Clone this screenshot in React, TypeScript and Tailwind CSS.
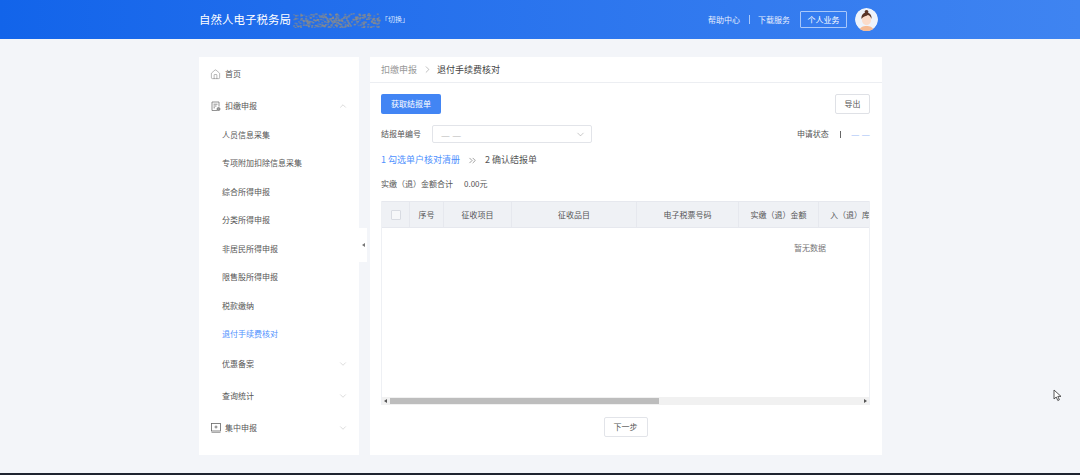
import { ChevronDown, ChevronUp, ChevronRight, ChevronsRight, House } from "lucide-react";

const subItems = ["人员信息采集", "专项附加扣除信息采集", "综合所得申报", "分类所得申报", "非居民所得申报", "限售股所得申报", "税款缴纳"];

const columns = [
  { title: "序号", width: "w-[34px]" },
  { title: "征收项目", width: "w-[68px]" },
  { title: "征收品目", width: "w-[125px]" },
  { title: "电子税票号码", width: "w-[102px]" },
  { title: "实缴（退）金额", width: "w-[80px]" },
];

// the blurred-out taxpayer name in the header
const rand = (n: number) => {
  const v = Math.sin(n * 12.9898) * 43758.5453;
  return v - Math.floor(v);
};
const noise = Array.from({ length: 300 }, (_, i) => ({
  x: rand(i + 1) * 86,
  y: 1 + rand(i + 500) * 14,
  o: 0.35 + rand(i + 900) * 0.5,
}));

function Avatar() {
  return (
    <svg width="23" height="23" viewBox="0 0 23 23" className="rounded-full">
      <circle cx="11.5" cy="11.5" r="11.5" fill="#eef3fb" />
      <path d="M4 23c1-4 4-5 7.500-5s6.500 1 7.500 5z" fill="#f6bb94" />
      <ellipse cx="11.500" cy="11.500" rx="4.600" ry="5.800" fill="#fbdcca" />
      <path d="M6.500 11c-.5-4 2-6.500 5-6.500s5.500 2.500 5 6.500c-.8-2.500-2-3.500-3.500-4-1.500 1-4.500 1-6.500 4z" fill="#5a3527" />
      <circle cx="11.500" cy="3.800" r="1.900" fill="#5a3527" />
    </svg>
  );
}

function ReportIcon() {
  return (
    <svg width="10" height="11" viewBox="0 0 10 11" fill="none" stroke="#777" strokeWidth="0.8">
      <path d="M6.500 9.500H1V1h7v4.500" />
      <path d="M2.500 3.200h4M2.500 5h3M2.500 6.800h1.500" />
      <circle cx="7.500" cy="8" r="1.500" fill="#999" />
    </svg>
  );
}

function GroupIcon() {
  return (
    <svg width="10" height="10" viewBox="0 0 10 10" fill="none" stroke="#666" strokeWidth="0.8">
      <rect x="0.500" y="0.500" width="9" height="7.500" />
      <path d="M0.500 9.500h9" stroke="#aaa" strokeWidth="1" />
      <path d="M5 2.500v3M3.500 4h3" />
    </svg>
  );
}

function MenuRow({ label, icon, open, className }: { label: string; icon?: React.ReactNode; open?: boolean; className: string }) {
  const Arrow = open ? ChevronUp : ChevronDown;
  return (
    <div className={`flex items-center pr-[11px] text-[8px] text-[#555] ${icon ? "pl-[12px]" : "pl-[23px]"} ${className}`}>
      {icon && <span className="mr-[4px] flex w-[10px] justify-center">{icon}</span>}
      <span className="grow">{label}</span>
      <Arrow size={10} strokeWidth={1} className="text-[#aaa]" />
    </div>
  );
}

function Sidebar() {
  return (
    <aside className="relative h-[398px] w-[160px] bg-white pt-[1px]">
      <div className="flex h-[32px] items-center gap-[4px] pl-[11px] text-[8px] text-[#555]">
        <House size={11} strokeWidth={1} className="text-[#666]" />
        <span>首页</span>
      </div>
      <MenuRow label="扣缴申报" icon={<ReportIcon />} open className="h-[32px]" />
      <div className="-mt-[1.500px] mb-[-1px]">
        {subItems.map((item) => (
          <div key={item} className="flex h-[28.500px] items-center pl-[23px] text-[8px] text-[#555]">
            {item}
          </div>
        ))}
        <div className="flex h-[28.500px] items-center pl-[23px] text-[8px] text-[#4d90fe]">退付手续费核对</div>
      </div>
      <MenuRow label="优惠备案" className="h-[32px]" />
      <MenuRow label="查询统计" className="h-[32px]" />
      <MenuRow label="集中申报" icon={<GroupIcon />} className="h-[32px]" />
      <div className="absolute left-[160px] top-[171px] flex h-[34px] w-[8px] items-center justify-center bg-white">
        <span className="h-0 w-0 border-y-[2.500px] border-r-[3px] border-y-transparent border-r-[#777]" />
      </div>
    </aside>
  );
}

function DataTable() {
  return (
    <div className="mt-[11px] h-[204px] overflow-hidden border-x border-[#eef0f4]">
      <div className="flex h-[27px] border-y border-[#e6e8ee] bg-[#eff1f5] text-[8px] text-[#555]">
        <div className="flex w-[28px] shrink-0 items-center justify-center border-r border-[#e6e8ee]">
          <span className="h-[10px] w-[10px] rounded-[1px] border border-[#d8dbe2] bg-[#f6f7f9]" />
        </div>
        {columns.map((col) => (
          <div key={col.title} className={`flex shrink-0 items-center justify-center border-r border-[#e6e8ee] ${col.width}`}>
            {col.title}
          </div>
        ))}
        <div className="flex grow items-center overflow-hidden whitespace-nowrap pl-[11px]">入（退）库</div>
      </div>
      <div className="flex h-[169px] justify-center pl-[369px] pt-[14px] text-[8px] text-[#777]">暂无数据</div>
      <div className="flex h-[8px] items-center bg-[#f1f1f1] px-[2px]">
        <span className="h-0 w-0 border-y-[2px] border-r-[3px] border-y-transparent border-r-[#555]" />
        <div className="ml-[3px] h-[6px] w-[269px] bg-[#bdbdbd]" />
        <span className="ml-auto h-0 w-0 border-y-[2px] border-l-[3px] border-y-transparent border-l-[#555]" />
      </div>
    </div>
  );
}

function Main() {
  return (
    <main className="h-[398px] w-[512px] bg-white">
      <div className="flex h-[26px] items-center border-b border-[#eceef2] pl-[11px] text-[9px]">
        <span className="text-[#999]">扣缴申报</span>
        <ChevronRight size={11} strokeWidth={1} className="ml-[5px] mr-[4px] text-[#777]" />
        <span className="text-[#444]">退付手续费核对</span>
      </div>
      <div className="px-[11px] pr-[12px] pt-[11px]">
        <div className="flex justify-between">
          <button className="h-[20px] w-[60px] rounded-[2px] bg-[#4285f4] text-[8px] text-white">获取结报单</button>
          <button className="h-[20px] w-[35px] rounded-[2px] border border-[#dfe1e6] text-[8px] text-[#555]">导出</button>
        </div>
        <div className="mt-[11px] flex h-[18px] items-center text-[8px] text-[#555]">
          <span className="w-[51px]">结报单编号</span>
          <div className="flex h-[18px] w-[160px] items-center justify-between rounded-[2px] border border-[#e2e4e9] pl-[8px] pr-[5px] text-[10px] text-[#ccc]">
            <span>— —</span>
            <ChevronDown size={11} strokeWidth={1} className="text-[#888]" />
          </div>
          <span className="ml-auto">申请状态</span>
          <span className="ml-[10px] h-[7px] w-px translate-x-[1px] bg-[#666]" />
          <span className="ml-[11px] text-[9.500px] text-[#a9c6f7]">— —</span>
        </div>
        <div className="mt-[9px] flex h-[16px] items-center text-[9px]">
          <span className="text-[#4d90fe]">1 勾选单户核对清册</span>
          <ChevronsRight size={11} strokeWidth={1.2} className="ml-[7px] mr-[7px] text-[#555]" />
          <span className="text-[#555]">2 确认结报单</span>
        </div>
        <div className="mt-[9px] flex h-[13px] items-center text-[8px] text-[#555]">
          <span>实缴（退）金额合计</span>
          <span className="ml-[11px]">0.00元</span>
        </div>
        <DataTable />
        <div className="mt-[12px] flex justify-center">
          <button className="h-[20px] w-[44px] rounded-[2px] border border-[#e2e4e9] text-[8px] text-[#555]">下一步</button>
        </div>
      </div>
    </main>
  );
}

export default function App() {
  return (
    <div className="flex h-[475px] w-[1080px] flex-col overflow-hidden bg-[#f3f5f9] font-['Noto_Sans_CJK_SC',sans-serif]">
      <header className="flex h-[39px] shrink-0 items-center bg-gradient-to-r from-[#1264ea] to-[#3f84f1] pl-[199px] pr-[202px] text-white">
        <span className="text-[11.400px] tracking-[0.100px]">自然人电子税务局</span>
        <svg width="88" height="16" viewBox="0 0 88 16" className="ml-[2px] blur-[0.5px]">
          {noise.map((d, i) => (
            <rect key={i} x={d.x} y={d.y} width="2" height="1.500" fill="#8d8c88" opacity={d.o} />
          ))}
        </svg>
        <span className="text-[7px] text-[#dce8ff]">「切换」</span>
        <span className="ml-auto translate-x-[1px] text-[8px] text-[#e6eefe]">帮助中心</span>
        <span className="mx-[9px] h-[9px] w-px translate-x-[1px] bg-[#a9c8fa]" />
        <span className="text-[8px] text-[#e6eefe]">下载服务</span>
        <span className="ml-[10px] flex h-[17px] w-[47px] items-center justify-center rounded-[1px] border border-[#a9c8fa] text-[8px]">个人业务</span>
        <span className="ml-[8px] flex">
          <Avatar />
        </span>
      </header>
      <div className="flex grow gap-[11px] pl-[199px] pt-[18px]">
        <Sidebar />
        <Main />
      </div>
      <div className="h-[2px] shrink-0 bg-[#1f2430]" />
      <svg width="10" height="13" viewBox="0 0 10 13" className="absolute left-[1053px] top-[389px]">
        <path d="M1 1v9l2.200-2 1.600 3.500 1.600-.7L4.800 7.400H8z" fill="#fff" stroke="#444" strokeWidth="0.9" />
      </svg>
    </div>
  );
}
